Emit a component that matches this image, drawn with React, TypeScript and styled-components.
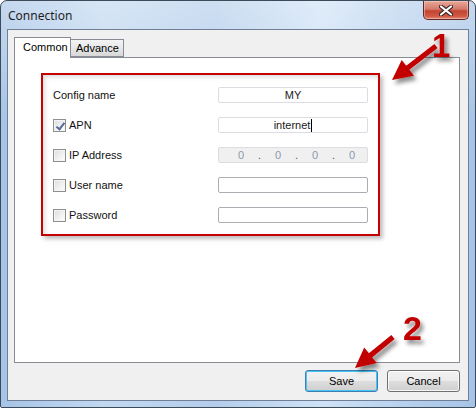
import React from 'react';
import styled, { createGlobalStyle } from 'styled-components';

const GlobalStyle = createGlobalStyle`
    html, body {
        margin: 0;
        padding: 0;
        background: #ffffff;
    }
    * {
        box-sizing: border-box;
    }
`;

type Pt = [number, number];

// builds an arrow polygon from tail to tip
function arrowPoints(tail: Pt, tip: Pt, shaft = 2.6, headLen = 20, headHalf = 10): string {
  const dx = tip[0] - tail[0];
  const dy = tip[1] - tail[1];
  const len = Math.hypot(dx, dy);
  const ux = dx / len;
  const uy = dy / len;
  const nx = -uy;
  const ny = ux;
  const bx = tip[0] - ux * headLen;
  const by = tip[1] - uy * headLen;
  const pts: Pt[] = [
    [tail[0] + nx * shaft, tail[1] + ny * shaft],
    [bx + nx * shaft, by + ny * shaft],
    [bx + nx * headHalf, by + ny * headHalf],
    tip,
    [bx - nx * headHalf, by - ny * headHalf],
    [bx - nx * shaft, by - ny * shaft],
    [tail[0] - nx * shaft, tail[1] - ny * shaft],
  ];
  return pts.map((p) => `${p[0].toFixed(1)},${p[1].toFixed(1)}`).join(' ');
}

const fields = [
  { label: 'Config name', check: null, value: 'MY', tone: 'soft' },
  { label: 'APN', check: true, value: 'internet', tone: 'soft', caret: true },
  { label: 'IP Address', check: false, ip: true, tone: 'ip' },
  { label: 'User name', check: false, value: '', tone: 'plain' },
  { label: 'Password', check: false, value: '', tone: 'plain' },
] as const;

function App() {
  return (
    <>
      <GlobalStyle />
      <Window>
        <TitleBar>
          <Title>Connection</Title>
          <CloseButton>
            <svg width="14" height="11" viewBox="0 0 14 11">
              <path
                d="M2 1.5 L12 9.5 M12 1.5 L2 9.5"
                stroke="#3b2626"
                strokeWidth="4.2"
                strokeLinecap="round"
              />
              <path
                d="M2 1.5 L12 9.5 M12 1.5 L2 9.5"
                stroke="#ffffff"
                strokeWidth="2.2"
                strokeLinecap="round"
              />
            </svg>
          </CloseButton>
        </TitleBar>
        <Client>
          <TabStrip>
            <Tab $active>Common</Tab>
            <Tab>Advance</Tab>
          </TabStrip>
          <TabPanel>
            <RedBox>
              {fields.map((f) => (
                <Row key={f.label}>
                  <Label>
                    {f.check !== null && <CheckBox $checked={f.check} />}
                    {f.label}
                  </Label>
                  <Field $tone={f.tone}>
                    {'ip' in f ? (
                      <IpWrap>
                        <Octet>0</Octet>
                        <Dot>.</Dot>
                        <Octet>0</Octet>
                        <Dot>.</Dot>
                        <Octet>0</Octet>
                        <Dot>.</Dot>
                        <Octet>0</Octet>
                      </IpWrap>
                    ) : (
                      <>
                        {f.value}
                        {'caret' in f && <Caret />}
                      </>
                    )}
                  </Field>
                </Row>
              ))}
            </RedBox>
          </TabPanel>
          <ButtonRow>
            <Button $focused>Save</Button>
            <Button>Cancel</Button>
          </ButtonRow>
        </Client>

        <Annotations width="476" height="408" viewBox="0 0 476 408">
          <defs>
            <filter id="shadow" x="-30%" y="-30%" width="160%" height="160%">
              <feDropShadow dx="3" dy="4" stdDeviation="2.2" floodColor="#000" floodOpacity="0.45" />
            </filter>
          </defs>
          <g filter="url(#shadow)" fill="#c20000">
            <polygon points={arrowPoints([436, 46], [392, 80])} />
            <text x="432" y="57" fontFamily="'Liberation Sans', Arial, sans-serif" fontWeight="bold" fontSize="33">1</text>
            <polygon points={arrowPoints([393, 337], [355, 368])} />
            <text x="403" y="340" fontFamily="'Liberation Sans', Arial, sans-serif" fontWeight="bold" fontSize="34">2</text>
          </g>
        </Annotations>
      </Window>
    </>
  );
}

export default App;


const Window = styled.div`
    position: relative;
    width: 476px;
    height: 408px;
    display: flex;
    flex-direction: column;
    padding: 0 6px 6px 6px;
    border: 1px solid #3d4a5a;
    border-radius: 7px 7px 2px 2px;
    background:
        linear-gradient(180deg, rgba(255, 255, 255, 0.35), rgba(255, 255, 255, 0) 30%),
        linear-gradient(90deg, #a6c4e7 0%, #c2d8f1 22%, #b3cdeb 45%, #cfe2f6 68%, #b6d0ed 85%, #a7c4e7 100%);
    font-family: 'Liberation Sans', Arial, sans-serif;
    font-size: 11px;
    color: #000;
`;

const TitleBar = styled.div`
    height: 28px;
    display: flex;
    justify-content: space-between;
    align-items: flex-start;
`;

const Title = styled.div`
    padding: 6px 0 0 1px;
    font-family: 'Noto Sans', 'Liberation Sans', sans-serif;
    font-size: 12px;
    color: #1e1e1e;
`;

const CloseButton = styled.div`
    width: 46px;
    height: 19px;
    display: flex;
    align-items: center;
    justify-content: center;
    border: 1px solid #5f2a23;
    border-top: none;
    border-radius: 0 0 5px 5px;
    background: linear-gradient(180deg, #e8a899 0%, #d47b6b 45%, #c24532 55%, #d15a45 85%, #e48a76 100%);
    box-shadow: inset 0 0 0 1px rgba(255, 220, 210, 0.45);
`;

const Client = styled.div`
    flex: 1;
    display: flex;
    flex-direction: column;
    border: 1px solid #6f7f94;
    background: #f0f0f0;
    padding: 7px 8px 8px 6px;
`;

const TabStrip = styled.div`
    display: flex;
    align-items: flex-end;
    height: 20px;
    position: relative;
    z-index: 1;
`;

const Tab = styled.div<{ $active?: boolean }>`
    display: flex;
    align-items: center;
    border: 1px solid #898c95;
    padding: 0 7px;
    height: ${(p) => (p.$active ? '21px' : '18px')};
    margin-bottom: ${(p) => (p.$active ? '-1px' : '0')};
    border-bottom: ${(p) => (p.$active ? 'none' : '1px solid #898c95')};
    background: ${(p) =>
      p.$active ? '#ffffff' : 'linear-gradient(180deg, #f4f4f4 0%, #e7e7e7 50%, #d8d8d8 100%)'};
    & + & {
        margin-left: -1px;
        padding: 0 4px 0 5px;
    }
    &:first-child {
        width: 57px;
        padding: 0 0 2px 8px;
    }
`;

const TabPanel = styled.div`
    height: 306px;
    border: 1px solid #898c95;
    background: #ffffff;
    padding: 15px 0 0 26px;
`;

const RedBox = styled.div`
    width: 339px;
    height: 163px;
    border: 2px solid #c40000;
    padding: 12px 0 0 10px;
    display: flex;
    flex-direction: column;
    gap: 14px;
    box-shadow: 3px 3px 4px rgba(0, 0, 0, 0.25), inset 2px 2px 5px rgba(0, 0, 0, 0.14);
`;

const Row = styled.div`
    display: grid;
    grid-template-columns: 165px 150px;
    height: 16px;
    align-items: center;
`;

const Label = styled.div`
    display: flex;
    align-items: center;
    gap: 3px;
    color: #111;
`;

const CheckBox = styled.span<{ $checked?: boolean }>`
    position: relative;
    width: 13px;
    height: 13px;
    border: 1px solid #8e8f8f;
    background: linear-gradient(135deg, #dcdcdc 0%, #f2f2f2 60%, #ffffff 100%);
    box-shadow: inset 0 0 0 1px #f4f4f4;
    &::after {
        content: '';
        display: ${(p) => (p.$checked ? 'block' : 'none')};
        position: absolute;
        left: 4px;
        top: 1px;
        width: 3px;
        height: 7px;
        border: solid #55699a;
        border-width: 0 2px 2px 0;
        transform: rotate(38deg);
    }
`;

const Field = styled.div<{ $tone: string }>`
    position: relative;
    height: 16px;
    display: flex;
    align-items: center;
    justify-content: center;
    border: 1px solid ${(p) => (p.$tone === 'plain' ? '#abadb3' : '#dcdde3')};
    border-radius: 2px;
    background: ${(p) => (p.$tone === 'ip' ? '#f0f0f0' : '#ffffff')};
    color: #1a1a1a;
`;

const Caret = styled.span`
    display: inline-block;
    width: 1px;
    height: 13px;
    margin-left: 1px;
    background: #000;
`;

const IpWrap = styled.div`
    width: 100%;
    display: flex;
    padding-left: 11px;
`;

const Octet = styled.span`
    width: 22px;
    text-align: center;
    color: #8a9aae;
`;

const Dot = styled.span`
    width: 15px;
    text-align: center;
    color: #555;
`;

const ButtonRow = styled.div`
    display: flex;
    justify-content: flex-end;
    gap: 9px;
    margin-top: 7px;
`;

const Button = styled.div<{ $focused?: boolean }>`
    width: 73px;
    height: 22px;
    display: flex;
    align-items: center;
    justify-content: center;
    border: 1px solid ${(p) => (p.$focused ? '#3c7fb1' : '#707070')};
    border-radius: 3px;
    background: linear-gradient(180deg, #f2f2f2 0%, #ebebeb 50%, #dddddd 51%, #cfcfcf 100%);
    box-shadow: inset 0 0 0 1px ${(p) => (p.$focused ? '#48c3f5' : 'rgba(255, 255, 255, 0.8)')};
    color: #000;
`;

const Annotations = styled.svg`
    position: absolute;
    left: -1px;
    top: -1px;
    pointer-events: none;
`;
